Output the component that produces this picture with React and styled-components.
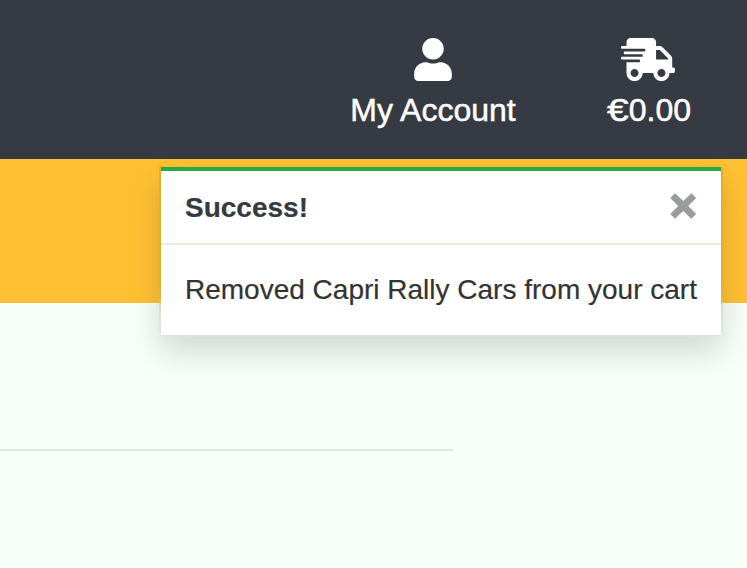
import React from "react";
import styled, { createGlobalStyle } from "styled-components";
import { FaUser, FaShippingFast } from "react-icons/fa";

const GlobalStyle = createGlobalStyle`
  * { box-sizing: border-box; }
  body {
    margin: 0;
    background: #f8fff9;
    font-family: "Liberation Sans", Arial, sans-serif;
    overflow: hidden;
  }
`;

const Page = styled.div`
  position: relative;
  width: 747px;
  height: 568px;
  overflow: hidden;
`;

const Header = styled.header`
  display: flex;
  justify-content: flex-end;
  gap: 90px;
  height: 159px;
  padding: 38px 56px 0 0;
  background: #363a42;
  color: #fff;
`;

const HeaderLink = styled.a`
  display: flex;
  flex-direction: column;
  align-items: center;
  font-size: 32px;
  line-height: 48px;
  color: inherit;
  -webkit-text-stroke: 0.5px #fff;

  svg {
    display: block;
    height: 43px;
    width: ${(p) => p.$iconWidth}px;
    margin: 0 2px 5px 0;
  }
`;

const Label = styled.span`
  margin-right: 1px;
`;

const Price = styled.span`
  display: flex;
`;

const Euro = styled.span`
  width: 22px;
  transform: scaleX(1.22);
  transform-origin: left;
`;

const Banner = styled.div`
  height: 144px;
  background: #ffc033;
`;

const Content = styled.main`
  padding-top: 146px;
`;

const Divider = styled.hr`
  width: 453px;
  height: 2px;
  margin: 0;
  border: 0;
  background: #dfe6e0;
`;

const Toast = styled.section`
  position: absolute;
  top: 167px;
  left: 159px;
  width: 564px;
  height: 170px;
  border: 2px solid rgba(0, 0, 0, 0.1);
  border-top: 0;
  border-radius: 0 0 6px 6px;
  backdrop-filter: blur(10px);
  box-shadow: 0 16px 32px rgba(0, 0, 0, 0.15);
`;

const ToastPanel = styled.div`
  height: 168px;
  border-top: 4px solid #28a745;
  background: #fff;
`;

const ToastHeader = styled.div`
  display: flex;
  align-items: center;
  justify-content: space-between;
  height: 74px;
  padding: 0 24px;
  border-bottom: 2px solid #f2e8d5;
`;

const Title = styled.strong`
  padding-top: 1px;
  font-size: 28px;
  line-height: 42px;
  color: #343a40;
  -webkit-text-stroke: 0.2px #343a40;
`;

const CloseButton = styled.button`
  display: flex;
  padding: 0;
  margin-bottom: 2px;
  border: 0;
  background: none;
  color: #999c9f;
`;

const ToastBody = styled.div`
  padding: 24px;
  font-size: 28px;
  line-height: 42px;
  white-space: nowrap;
  color: #333;
  -webkit-text-stroke: 0.2px #333;
`;

export default function App() {
  return (
    <>
      <GlobalStyle />
      <Page>
        <Header>
          <HeaderLink $iconWidth={38}>
            <FaUser />
            <Label>My Account</Label>
          </HeaderLink>
          <HeaderLink $iconWidth={54}>
            <FaShippingFast />
            <Price>
              <Euro>€</Euro>0.00
            </Price>
          </HeaderLink>
        </Header>
        <Banner />
        <Content>
          <Divider />
        </Content>
        <Toast role="status">
          <ToastPanel>
            <ToastHeader>
              <Title>Success!</Title>
              <CloseButton aria-label="Close">
                <svg width="27" height="26" viewBox="0 0 27 26">
                  <path
                    d="M5 0.2 13.2 8 21.4 0.2 26.2 5 18.2 13 26.2 21 21.4 25.8 13.2 18 5 25.8 0.2 21 8.2 13 0.2 5Z"
                    fill="currentColor"
                  />
                </svg>
              </CloseButton>
            </ToastHeader>
            <ToastBody>Removed Capri Rally Cars from your cart</ToastBody>
          </ToastPanel>
        </Toast>
      </Page>
    </>
  );
}
